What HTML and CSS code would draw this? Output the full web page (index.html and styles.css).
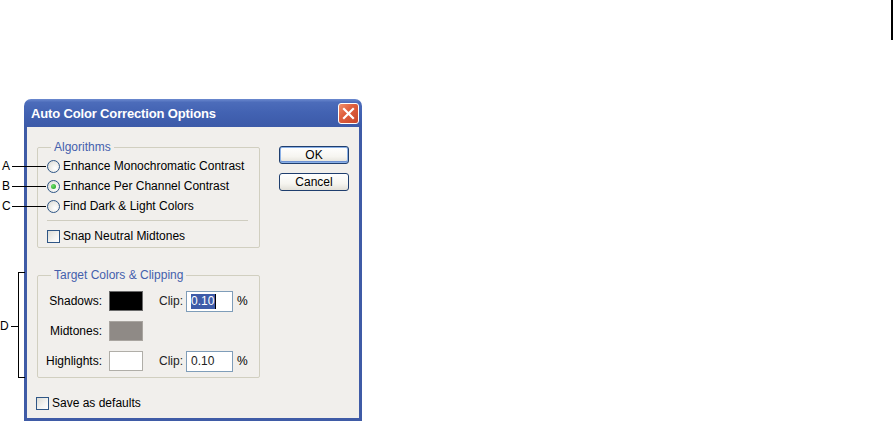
FILE: index.html
```html
<!DOCTYPE html>
<html>
<head>
<meta charset="utf-8">
<link rel="stylesheet" href="styles.css">
</head>
<body>
<div class="page">
  <div class="dialog">
    <div class="titlebar">
      <span class="title">Auto Color Correction Options</span>
      <span class="close"><svg width="21" height="21" viewBox="0 0 21 21"><path d="M6 6 L15 15 M15 6 L6 15" stroke="#fff" stroke-width="2.2" stroke-linecap="square"/></svg></span>
    </div>
    <div class="body">
      <div class="main">
        <fieldset class="group algo">
          <legend>Algorithms</legend>
          <div class="opt"><span class="radio"></span>Enhance Monochromatic Contrast</div>
          <div class="opt"><span class="radio on"></span>Enhance Per Channel Contrast</div>
          <div class="opt"><span class="radio"></span>Find Dark &amp; Light Colors</div>
          <div class="sep"></div>
          <div class="opt"><span class="check"></span>Snap Neutral Midtones</div>
        </fieldset>
        <fieldset class="group target">
          <legend>Target Colors &amp; Clipping</legend>
          <div class="trow">
            <span class="tlabel">Shadows:</span>
            <span class="swatch black"></span>
            <span class="cliplabel">Clip:</span>
            <span class="field"><span class="sel">0.10</span><span class="caret"></span></span>
            <span class="pct">%</span>
          </div>
          <div class="trow">
            <span class="tlabel">Midtones:</span>
            <span class="swatch gray"></span>
          </div>
          <div class="trow">
            <span class="tlabel">Highlights:</span>
            <span class="swatch white"></span>
            <span class="cliplabel">Clip:</span>
            <span class="field">0.10</span>
            <span class="pct">%</span>
          </div>
        </fieldset>
        <div class="opt save"><span class="check"></span>Save as defaults</div>
      </div>
      <div class="buttons">
        <div class="btn default">OK</div>
        <div class="btn">Cancel</div>
      </div>
    </div>
  </div>
  <div class="callout ca"><span class="ltr">A</span><span class="lead"></span></div>
  <div class="callout cb"><span class="ltr">B</span><span class="lead"></span></div>
  <div class="callout cc"><span class="ltr">C</span><span class="lead"></span></div>
  <div class="callout cd"><span class="ltr">D</span><span class="dash"></span></div>
  <div class="bracket"></div>
  <div class="edge"></div>
</div>
</body>
</html>
```
FILE: styles.css
```css
html, body {
  margin: 0;
  padding: 0;
  background: #fff;
}
body {
  font-family: "Liberation Sans", Arial, sans-serif;
  font-size: 12px;
  color: #000;
  overflow: hidden;
}
.page {
  position: relative;
  width: 893px;
  height: 421px;
  padding: 99px 0 0 24px;
  box-sizing: border-box;
}
.dialog {
  width: 338px;
}
.titlebar {
  height: 28px;
  border-radius: 7px 7px 0 0;
  background: linear-gradient(#6b89cf 0%, #4c6cba 12%, #4262b2 50%, #3c5aa8 100%);
  display: flex;
  align-items: center;
  justify-content: space-between;
  padding: 0 3px 0 7px;
  box-sizing: border-box;
}
.title {
  color: #fff;
  font-weight: bold;
  font-size: 13px;
  letter-spacing: -0.15px;
  margin-top: 1px;
}
.close {
  width: 21px;
  height: 21px;
  box-sizing: border-box;
  border: 1px solid #fff;
  border-radius: 3px;
  background: linear-gradient(135deg, #f0906c 0%, #e0603e 40%, #c8452a 100%);
  display: flex;
}
.close svg { margin: -1px; }
.body {
  width: 338px;
  height: 294px;
  box-sizing: border-box;
  background: #f1efec;
  border: 3px solid #3f5ba6;
  border-top: 0;
  display: flex;
  padding: 13px 0 0 10px;
}
.main {
  width: 223px;
  flex-shrink: 0;
  display: flex;
  flex-direction: column;
}
.group {
  margin: 0;
  border: 1px solid #d1cfc0;
  border-radius: 2px;
  padding: 0 10px 1px 9px;
  min-width: 0;
}
.group legend {
  color: #4460ac;
  padding: 0 3px;
  margin-left: 4px;
  line-height: 14px;
}
.algo {
  padding-top: 2px;
}
.opt {
  height: 20px;
  display: flex;
  align-items: center;
  gap: 3px;
  white-space: nowrap;
}
.radio {
  width: 13px;
  height: 13px;
  flex-shrink: 0;
  box-sizing: border-box;
  border: 1px solid #2f5686;
  border-radius: 50%;
  background: radial-gradient(circle at 65% 65%, #ffffff 0%, #e8e8e4 60%, #cfcfc8 100%);
  display: flex;
  align-items: center;
  justify-content: center;
}
.radio.on::after {
  content: "";
  width: 5px;
  height: 5px;
  border-radius: 50%;
  background: radial-gradient(circle at 35% 35%, #6ee06a, #1d9a1d);
}
.check {
  width: 13px;
  height: 13px;
  flex-shrink: 0;
  box-sizing: border-box;
  border: 1px solid #2f5686;
  background: linear-gradient(135deg, #dcdcd6 0%, #f4f4f2 60%, #ffffff 100%);
}
.sep {
  height: 1px;
  background: #cfcdc0;
  margin: 4px 1px 5px 0;
}
.target {
  margin-top: 20px;
  padding-top: 4px;
}
.trow {
  height: 30px;
  display: flex;
  align-items: center;
  white-space: nowrap;
}
.tlabel {
  width: 55px;
  flex-shrink: 0;
  display: flex;
  justify-content: flex-end;
  color: #000;
}
.swatch {
  width: 34px;
  height: 20px;
  flex-shrink: 0;
  box-sizing: border-box;
  margin-left: 7px;
  border: 1px solid #b8b6ac;
}
.swatch.black { background: #000; border-color: #6a6a6a; }
.swatch.gray { background: #8f8a86; border-color: #a9a5a0; }
.swatch.white { background: #fff; border-color: #b0aea8; }
.cliplabel {
  margin-left: 16px;
  width: 27px;
  flex-shrink: 0;
  color: #222;
}
.field {
  width: 47px;
  height: 21px;
  flex-shrink: 0;
  box-sizing: border-box;
  border: 1px solid #7f9db9;
  background: #fff;
  display: flex;
  align-items: center;
  padding-left: 4px;
  color: #222;
}
.sel {
  background: #3d5ba8;
  color: #fff;
  line-height: 15px;
  padding: 0 1px 0 0;
}
.caret {
  width: 1px;
  height: 15px;
  background: #000;
}
.pct {
  margin-left: 4px;
}
.save {
  margin-top: 15px;
  margin-left: -1px;
}
.buttons {
  margin-left: 19px;
  padding-top: 6px;
  display: flex;
  flex-direction: column;
  gap: 9px;
}
.btn {
  width: 70px;
  height: 18px;
  box-sizing: border-box;
  border: 1px solid #1f3e6e;
  border-radius: 3px;
  background: linear-gradient(#ffffff 0%, #f6f5f0 60%, #e2e0d8 100%);
  display: flex;
  align-items: center;
  justify-content: center;
  line-height: 14px;
}
.btn.default {
  box-shadow: inset 0 0 0 1px #8ab0e6, inset 0 -1px 0 1px #6d92d4;
}
.callout {
  position: absolute;
  left: 0;
  display: flex;
  align-items: center;
  height: 14px;
}
.ltr {
  width: 12px;
  padding-left: 2px;
  box-sizing: border-box;
  font-size: 12px;
  line-height: 14px;
}
.lead {
  width: 34px;
  height: 1px;
  background: #000;
}
.ca { top: 159px; }
.cb { top: 179px; }
.cc { top: 199px; }
.cd { top: 319px; }
.cd .ltr { padding-left: 0; width: 11px; }
.dash {
  width: 7px;
  height: 1px;
  background: #000;
}
.bracket {
  position: absolute;
  left: 18px;
  top: 272px;
  width: 6px;
  height: 104px;
  border: 1px solid #000;
  border-right: 0;
}
.edge {
  position: absolute;
  left: 891px;
  top: 0;
  width: 2px;
  height: 40px;
  background: #000;
}
```
